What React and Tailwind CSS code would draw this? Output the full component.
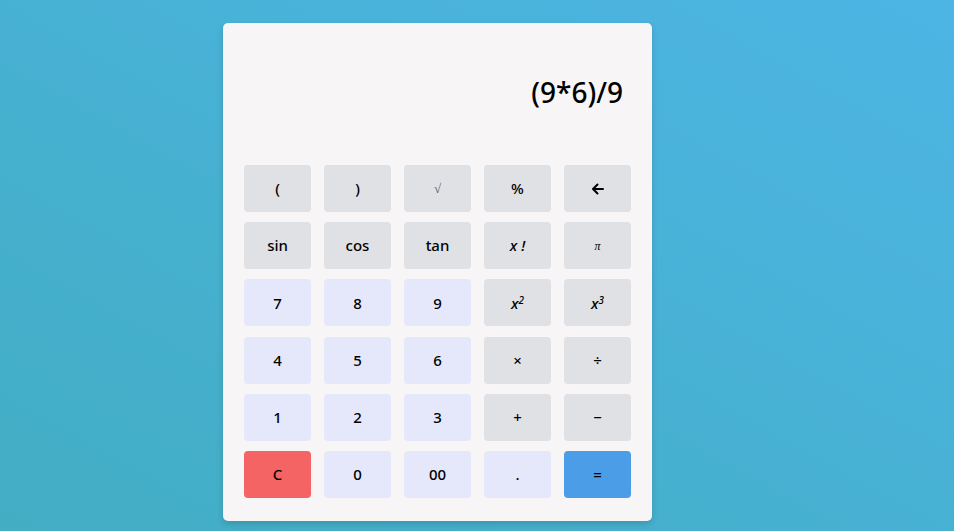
import React from 'react';

const grey = 'bg-[#e0e1e4]';
const num = 'bg-[#e5e8fa]';

const keys = [
  ['(', grey], [')', grey], ['√', grey, 'sqrt'], ['%', grey], ['←', grey, 'back'],
  ['sin', grey], ['cos', grey], ['tan', grey], ['x !', grey, 'fact'], ['π', grey, 'pi'],
  ['7', num], ['8', num], ['9', num], ['x2', grey, 'sq'], ['x3', grey, 'cube'],
  ['4', num], ['5', num], ['6', num], ['×', grey], ['÷', grey],
  ['1', num], ['2', num], ['3', num], ['+', grey], ['−', grey],
  ['C', 'bg-[#f56464]'], ['0', num], ['00', num], ['.', num], ['=', 'bg-[#4b9de8]'],
];

const Label = ({ label, kind }) => {
  if (kind === 'sqrt') return <span className="text-[13px] font-normal text-gray-600 font-['Liberation_Serif',serif]">√</span>;
  if (kind === 'back') {
    return (
      <svg width="14" height="14" viewBox="0 0 14 14" fill="none" stroke="black" strokeWidth="2" strokeLinecap="round" strokeLinejoin="round">
        <path d="M12 7H2.5M6.5 2.5L2 7l4.5 4.5" />
      </svg>
    );
  }
  if (kind === 'fact') return <span className="italic">x !</span>;
  if (kind === 'pi') return <span className="text-[12px] font-normal font-['Liberation_Serif',serif] italic">π</span>;
  if (kind === 'sq') return <span className="italic">x<sup className="text-[10px] -top-[5px]">2</sup></span>;
  if (kind === 'cube') return <span className="italic">x<sup className="text-[10px] -top-[5px]">3</sup></span>;
  return <span>{label}</span>;
};

export default function App() {
  return (
    <div className="min-h-screen w-full bg-[linear-gradient(to_top_right,#42adc3,#4db5e4)] font-['Noto_Sans',sans-serif]">
      <div className="flex justify-start pl-[223px] pt-[23px]">
        <div className="w-[429px] h-[498px] rounded-[5px] bg-[#f7f5f6] shadow-[0_3px_6px_rgba(0,0,0,0.15)] flex flex-col px-[21px]">
          <div className="h-[142px] flex items-center justify-end pr-[8px] pb-[4px]">
            <span className="text-[28px] font-medium text-black">(9*6)/9</span>
          </div>
          <div className="grid grid-cols-5 gap-x-[13px] gap-y-[10.2px]">
            {keys.map(([label, bg, kind], i) => (
              <button
                key={i}
                className={`${bg} h-[47px] rounded-[4px] flex items-center justify-center text-[15px] font-medium text-black`}
              >
                <Label label={label} kind={kind} />
              </button>
            ))}
          </div>
        </div>
      </div>
    </div>
  );
}
